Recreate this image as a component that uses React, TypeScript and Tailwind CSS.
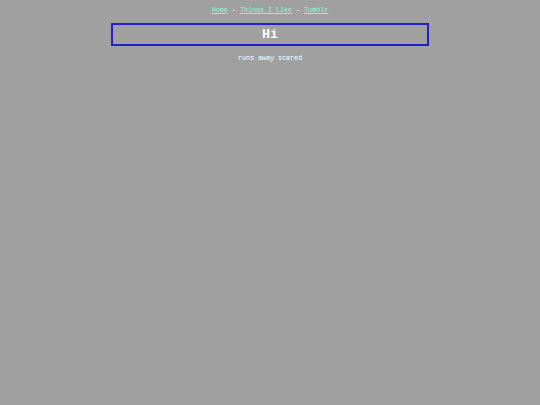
export default function App() {
  return (
    <div
      className="min-h-[405px] bg-[#a0a0a0] text-white text-center"
      style={{ fontFamily: '"Liberation Mono", "DejaVu Sans Mono", monospace' }}
    >
      <div className="pt-[6px] text-[6.7px] leading-[8px]">
        <a href="#" className="text-[#7fffd4] underline">Home</a>
        {' - '}
        <a href="#" className="text-[#7fffd4] underline">Things I Like</a>
        {' - '}
        <a href="#" className="text-[#7fffd4] underline">Tumblr</a>
      </div>
      <div className="mx-auto mt-[9px] w-[318px] h-[23px] border-2 border-[#2222cc] flex items-center justify-center">
        <h1 className="text-[13.3px] font-bold leading-none">Hi</h1>
      </div>
      <p className="mt-[8px] text-[6.7px] leading-[8px]">runs away scared</p>
    </div>
  );
}
